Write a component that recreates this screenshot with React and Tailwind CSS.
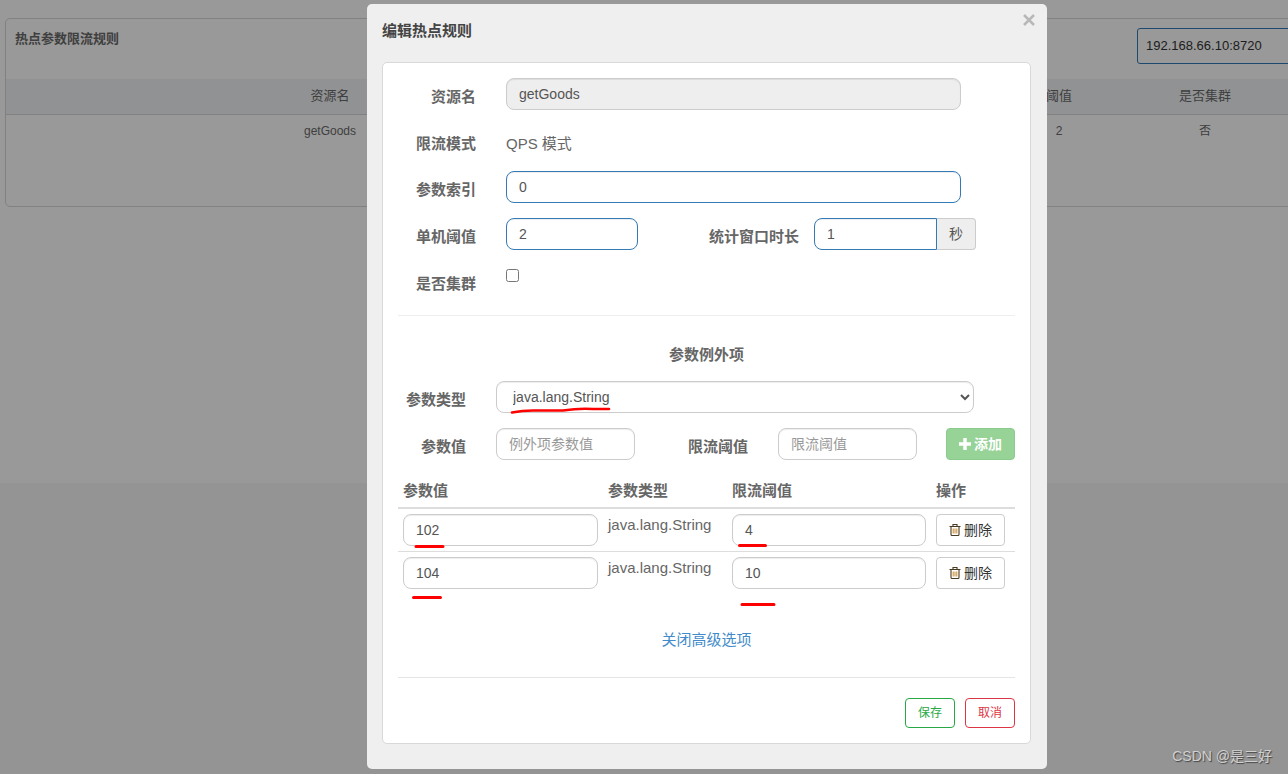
import React, { useState } from 'react'
import clsx from 'clsx'

const FONT = "font-['Liberation_Sans','Noto_Sans_CJK_SC',sans-serif]"
const CONTROL = 'h-8 rounded-lg border bg-white px-3 text-sm text-[#555] shadow-[inset_0_1px_1px_rgba(0,0,0,0.075)] outline-none placeholder:text-[#999]'
const LABEL = 'shrink-0 pt-2 text-right text-[15px] leading-[22px] font-bold text-[#666]'

function PlusIcon() {
  return (
    <svg className="size-3 fill-current" viewBox="0 0 12 12" aria-hidden="true">
      <path d="M4.3 0h3.4v4.3H12v3.4H7.7V12H4.3V7.7H0V4.3h4.3z" />
    </svg>
  )
}

function TrashIcon() {
  return (
    <svg className="size-3" viewBox="0 0 12 12" fill="none" stroke="#4a3a22" aria-hidden="true">
      <path d="M.5 2.5h11M4 2.500V.5h4v2M2 3v7.500q0 1 1 1h6q1 0 1-1V3" strokeWidth="1.1" />
      <path d="M4.200 4.500v5M6 4.500v5M7.800 4.500v5" stroke="#c98a2e" />
    </svg>
  )
}

function Field({ className, tone = 'plain', ...props }) {
  return (
    <input
      className={clsx(CONTROL, tone === 'blue' ? 'border-[#337ab7]' : 'border-[#ccc]', 'disabled:bg-[#eee]', className)}
      {...props}
    />
  )
}

function RulesPage() {
  return (
    <div className="h-[483px] bg-white pt-[18px] pr-[5px] pl-[5px]">
      <div className="h-[189px] rounded-[5px] border border-[#d8d8d8]">
        <div className="flex h-[60px] items-start justify-between px-[9px] pt-[9px]">
          <h1 className="text-[13px] leading-[22px] font-bold text-[#6a6a6a]">热点参数限流规则</h1>
          <select
            aria-label="机器"
            className="h-9 w-[262px] appearance-none rounded-[3px] border border-[#337ab7] px-2 text-[13px] text-[#333]"
          >
            <option>192.168.66.10:8720</option>
          </select>
        </div>
        <table className="w-full table-fixed text-center text-[#6a6a6a]">
          <colgroup>
            <col className="w-[648px]" />
            <col className="w-[166px]" />
            <col className="w-[166px]" />
            <col className="w-[146px]" />
            <col className="w-[146px]" />
            <col />
          </colgroup>
          <thead className="border-b border-[#d8d8d8] bg-[#f1f3f6] text-[13px] leading-[33px]">
            <tr>
              {['资源名', '参数索引', '流控模式', '阈值', '是否集群', ''].map((name) => (
                <th key={name} className="pb-0.5 font-normal">{name}</th>
              ))}
            </tr>
          </thead>
          <tbody className="text-xs leading-8">
            <tr>
              <td>getGoods</td>
              <td>0</td>
              <td>QPS</td>
              <td>2</td>
              <td>否</td>
              <td></td>
            </tr>
          </tbody>
        </table>
      </div>
    </div>
  )
}

function ExceptionTable({ items, onChange, onRemove }) {
  return (
    <table className="w-full table-fixed text-left text-[15px] text-[#666]">
      <colgroup>
        <col className="w-[205px]" />
        <col className="w-[124px]" />
        <col className="w-[204px]" />
        <col />
      </colgroup>
      <thead className="border-b-2 border-[#ddd] leading-[22px]">
        <tr>
          {['参数值', '参数类型', '限流阈值', '操作'].map((name) => (
            <th key={name} className="px-[5px] pb-[5px] font-bold">{name}</th>
          ))}
        </tr>
      </thead>
      <tbody className="divide-y divide-[#ddd]">
        {items.map((item, i) => (
          <tr key={i} className="align-top">
            <td className="p-[5px]">
              <Field className="block w-full" aria-label="参数值" value={item.value} onChange={(e) => onChange(i, 'value', e.target.value)} />
            </td>
            <td className="p-[5px] leading-[22px]">{item.type}</td>
            <td className="p-[5px]">
              <Field className="block w-full" aria-label="限流阈值" value={item.count} onChange={(e) => onChange(i, 'count', e.target.value)} />
            </td>
            <td className="p-[5px]">
              <button
                type="button"
                onClick={() => onRemove(i)}
                className="flex h-8 w-[69px] items-center justify-center gap-[3px] rounded-[4px] border border-[#ccc] bg-white text-sm text-[#333]"
              >
                <TrashIcon />
                删除
              </button>
            </td>
          </tr>
        ))}
      </tbody>
    </table>
  )
}

function RuleDialog() {
  const [index, setIndex] = useState('0')
  const [count, setCount] = useState('2')
  const [duration, setDuration] = useState('1')
  const [items, setItems] = useState([
    { value: '102', type: 'java.lang.String', count: '4' },
    { value: '104', type: 'java.lang.String', count: '10' },
  ])

  const changeItem = (i, key, value) => setItems(items.map((item, n) => (n === i ? { ...item, [key]: value } : item)))
  const removeItem = (i) => setItems(items.filter((_, n) => n !== i))

  return (
    <div role="dialog" aria-labelledby="dialog-title" className="relative w-[680px] rounded-[5px] bg-[#efefef] pt-4 pr-4 pb-[25px] pl-[15px]">
      <header className="flex h-[42px] items-start justify-between">
        <h2 id="dialog-title" className="text-[15px] leading-[22px] font-bold text-[#444]">编辑热点规则</h2>
        <button type="button" aria-label="关闭" className="-mt-3 -mr-2.5 text-[#b8b8b8]">
          <svg className="m-1.5 size-3" viewBox="0 0 12 12" fill="none" stroke="currentColor" strokeWidth="2.5" aria-hidden="true">
            <path d="M1 1l10 10M11 1L1 11" />
          </svg>
        </button>
      </header>

      <form className="rounded-[5px] border border-[#d8d8d8] bg-white p-[15px]" onSubmit={(e) => e.preventDefault()}>
        <div className="flex flex-col gap-[15px]">
          <div className="flex h-8 gap-[30px]">
            <label htmlFor="resource" className={clsx(LABEL, 'w-[78px]')}>资源名</label>
            <Field id="resource" className="w-[455px]" value="getGoods" disabled readOnly />
          </div>
          <div className="flex h-[31px] gap-[30px]">
            <span className={clsx(LABEL, 'w-[78px]')}>限流模式</span>
            <span className="pt-2 text-[15px] leading-[22px] text-[#666]">QPS 模式</span>
          </div>
          <div className="flex h-8 gap-[30px]">
            <label htmlFor="index" className={clsx(LABEL, 'w-[78px]')}>参数索引</label>
            <Field id="index" tone="blue" className="w-[455px]" value={index} onChange={(e) => setIndex(e.target.value)} />
          </div>
          <div className="flex h-8">
            <label htmlFor="count" className={clsx(LABEL, 'mr-[30px] w-[78px]')}>单机阈值</label>
            <Field id="count" tone="blue" className="w-[132px]" value={count} onChange={(e) => setCount(e.target.value)} />
            <label htmlFor="duration" className={clsx(LABEL, 'mr-[15px] w-[161px]')}>统计窗口时长</label>
            <Field
              id="duration"
              tone="blue"
              className="w-[123px] rounded-r-none"
              value={duration}
              onChange={(e) => setDuration(e.target.value)}
            />
            <span className="flex w-[39px] items-center justify-center rounded-r-[4px] border border-l-0 border-[#ccc] bg-[#eee] text-sm text-[#555]">秒</span>
          </div>
          <div className="flex h-8 gap-[30px]">
            <label htmlFor="cluster" className={clsx(LABEL, 'w-[78px]')}>是否集群</label>
            <input id="cluster" type="checkbox" className="mt-1 size-[13px]" />
          </div>
        </div>

        <hr className="mt-[18px] border-[#eee]" />

        <h3 className="mt-7 text-center text-[15px] leading-[22px] font-bold text-[#666]">参数例外项</h3>

        <div className="mt-[15px] flex h-8 gap-[30px]">
          <label htmlFor="type" className={clsx(LABEL, 'w-[68px]')}>参数类型</label>
          <select id="type" className={clsx(CONTROL, 'w-[478px] border-[#ccc]')}>
            <option>java.lang.String</option>
            <option>int</option>
            <option>long</option>
            <option>double</option>
          </select>
        </div>
        <div className="mt-[15px] flex h-8 justify-between">
          <label htmlFor="value" className={clsx(LABEL, 'mr-[30px] w-[68px]')}>参数值</label>
          <Field id="value" className="w-[139px]" placeholder="例外项参数值" />
          <label htmlFor="limit" className={clsx(LABEL, 'mr-[30px] w-[113px]')}>限流阈值</label>
          <Field id="limit" className="w-[139px]" placeholder="限流阈值" />
          <button
            type="button"
            disabled
            className="ml-auto flex w-[69px] items-center justify-center gap-[3px] rounded-[4px] border border-[#8acb8e] bg-[#97d297] text-sm font-bold text-white"
          >
            <PlusIcon />
            添加
          </button>
        </div>

        <div className="mt-5">
          <ExceptionTable items={items} onChange={changeItem} onRemove={removeItem} />
        </div>

        <div className="mt-[35px] text-center text-[15px] leading-[22px]">
          <a href="#" className="text-[#428bca]">关闭高级选项</a>
        </div>

        <hr className="mt-[26px] border-[#e5e5e5]" />

        <div className="mt-5 flex justify-end gap-2.5">
          <button type="submit" className="h-[30px] w-[50px] rounded-[4px] border border-[#28a745] text-xs text-[#28a745]">保存</button>
          <button type="button" className="h-[30px] w-[50px] rounded-[4px] border border-[#dc3545] text-xs text-[#dc3545]">取消</button>
        </div>
      </form>

      {/* red pen marks under the values */}
      <svg className="pointer-events-none absolute top-0 left-0 h-full w-full" viewBox="0 0 680 765" fill="none" stroke="#f00" strokeWidth="3" strokeLinecap="round" aria-hidden="true">
        <path d="M145 408.500Q155 406.500 166 406.500H196Q212 404 226 405H242" strokeWidth="2.600" />
        <path d="M49 542.500h27M372.500 541.500h26M46.500 593.500h27M375 600.500h32" />
      </svg>
    </div>
  )
}

export default function App() {
  return (
    <div className={clsx('relative min-h-screen overflow-hidden bg-[#f7f7f7]', FONT)}>
      <div className="relative -mr-[126px] min-h-screen">
        <RulesPage />
        <div className="absolute inset-0 flex items-start justify-center bg-black/40 pt-1">
          <RuleDialog />
        </div>
      </div>
      <div className="absolute right-4 bottom-1.5 text-sm leading-6 text-[#d0d0d0] [text-shadow:1px_1px_1px_#444]">CSDN @是三好</div>
    </div>
  )
}
